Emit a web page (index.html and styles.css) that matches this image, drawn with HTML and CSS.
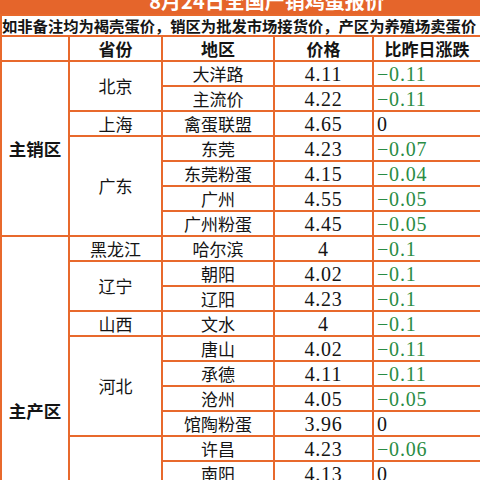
FILE: index.html
```html
<!DOCTYPE html>
<html lang="zh">
<head>
<meta charset="utf-8">
<link rel="stylesheet" href="styles.css">
</head>
<body>
<div class="sheet">
<table class="grid">
<colgroup>
<col class="c1"><col class="c2"><col class="c3"><col class="c4"><col class="c5">
</colgroup>
<tr class="title-row"><td colspan="5" class="title"><span class="title-text">8月24日全国产销鸡蛋报价</span></td></tr>
<tr class="note-row"><td colspan="5" class="note">如非备注均为褐壳蛋价，销区为批发市场接货价，产区为养殖场卖蛋价</td></tr>
<tr class="head-row"><td></td><td class="hd">省份</td><td class="hd">地区</td><td class="hd">价格</td><td class="hd">比昨日涨跌</td></tr>

<tr><td rowspan="7" class="zone">主销区</td><td rowspan="2" class="prov">北京</td><td class="area">大洋路</td><td class="price">4.11</td><td class="chg down">−0.11</td></tr>
<tr><td class="area">主流价</td><td class="price">4.22</td><td class="chg down">−0.11</td></tr>
<tr><td class="prov">上海</td><td class="area">禽蛋联盟</td><td class="price">4.65</td><td class="chg">0</td></tr>
<tr><td rowspan="4" class="prov">广东</td><td class="area">东莞</td><td class="price">4.23</td><td class="chg down">−0.07</td></tr>
<tr><td class="area">东莞粉蛋</td><td class="price">4.15</td><td class="chg down">−0.04</td></tr>
<tr><td class="area">广州</td><td class="price">4.55</td><td class="chg down">−0.05</td></tr>
<tr><td class="area">广州粉蛋</td><td class="price">4.45</td><td class="chg down">−0.05</td></tr>

<tr><td rowspan="14" class="zone">主产区</td><td class="prov">黑龙江</td><td class="area">哈尔滨</td><td class="price">4</td><td class="chg down">−0.1</td></tr>
<tr><td rowspan="2" class="prov">辽宁</td><td class="area">朝阳</td><td class="price">4.02</td><td class="chg down">−0.1</td></tr>
<tr><td class="area">辽阳</td><td class="price">4.23</td><td class="chg down">−0.1</td></tr>
<tr><td class="prov">山西</td><td class="area">文水</td><td class="price">4</td><td class="chg down">−0.1</td></tr>
<tr><td rowspan="4" class="prov">河北</td><td class="area">唐山</td><td class="price">4.02</td><td class="chg down">−0.11</td></tr>
<tr><td class="area">承德</td><td class="price">4.11</td><td class="chg down">−0.11</td></tr>
<tr><td class="area">沧州</td><td class="price">4.05</td><td class="chg down">−0.05</td></tr>
<tr><td class="area">馆陶粉蛋</td><td class="price">3.96</td><td class="chg">0</td></tr>
<tr><td rowspan="5" class="prov">河南</td><td class="area">许昌</td><td class="price">4.23</td><td class="chg down">−0.06</td></tr>
<tr><td class="area">南阳</td><td class="price">4.13</td><td class="chg">0</td></tr>
<tr><td class="area">驻马店</td><td class="price">4.10</td><td class="chg">0</td></tr>
<tr><td class="area">郑州</td><td class="price">4.15</td><td class="chg">0</td></tr>
<tr><td class="area">新乡</td><td class="price">4.08</td><td class="chg">0</td></tr>
<tr><td class="prov">山东</td><td class="area">德州</td><td class="price">4.10</td><td class="chg">0</td></tr>
</table>
</div>
</body>
</html>
```
FILE: styles.css
```css
html, body {
  margin: 0;
  padding: 0;
  background: #ffffff;
  overflow: hidden;
}
.sheet {
  width: 480px;
  height: 480px;
  overflow: hidden;
}
.grid {
  width: 480px;
  table-layout: fixed;
  border-collapse: collapse;
  font-family: "Noto Sans CJK SC", "Noto Sans", sans-serif;
  color: #141414;
}
.c1 { width: 68px; }
.c2 { width: 93px; }
.c3 { width: 112px; }
.c4 { width: 99px; }
.c5 { width: 108px; }
.grid td {
  border: 2px solid #e8692c;
  padding: 0;
  height: 23px;
  text-align: center;
  vertical-align: middle;
  font-size: 17px;
  line-height: 20px;
  white-space: nowrap;
  overflow: hidden;
}
.grid .title-row td {
  height: 14px;
  background: #e5652b;
  border-top: none;
  border-left-color: #e5652b;
  border-right-color: #e5652b;
  vertical-align: top;
}
.title-text {
  display: block;
  overflow: hidden;
  color: #ffffff;
  font-weight: bold;
  font-size: 20px;
  line-height: 20px;
  padding-left: 52px;
  margin-top: -9px;
  margin-bottom: -9px;
}
.grid .note-row td {
  height: 19px;
  text-align: left;
  font-weight: bold;
  font-size: 15.3px;
  line-height: 19px;
  padding-left: 0;
}
.grid .hd {
  font-weight: bold;
  font-size: 17px;
}
.grid .zone {
  font-weight: bold;
  font-size: 17.5px;
}
.grid .price {
  font-family: "Liberation Serif", "Noto Sans CJK SC", serif;
  font-size: 20px;
  letter-spacing: 0.8px;
}
.grid .chg {
  text-align: left;
  padding-left: 3px;
  font-family: "Liberation Serif", "Noto Sans CJK SC", serif;
  font-size: 20px;
  letter-spacing: 0.8px;
}
.grid .down {
  color: #2a8c44;
}
```
